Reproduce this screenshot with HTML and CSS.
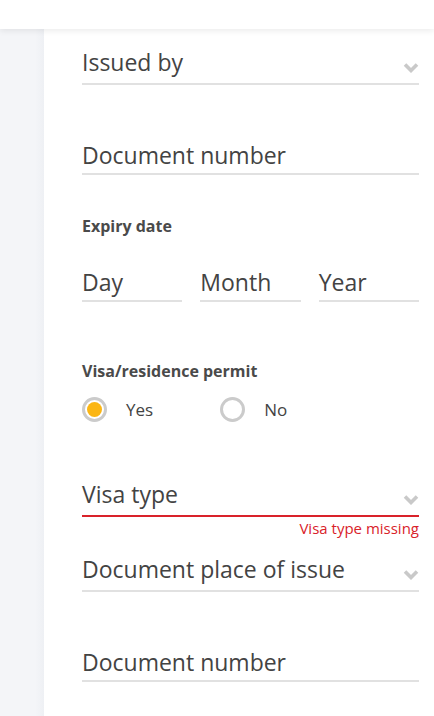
FILE: index.html
```html
<!DOCTYPE html>
<html lang="en">
<head>
    <meta charset="UTF-8">
    <meta name="viewport" content="width=device-width, initial-scale=1.0">
    <title>Travel document</title>
    <link rel="stylesheet" href="styles.css">
</head>
<body>
    <header class="topbar"></header>
    <div class="page">
        <aside class="sidebar"></aside>
        <main class="form">
            <div class="field select">
                <span class="placeholder">Issued by</span>
                <svg class="chevron" viewBox="0 0 16 11"><path d="M2 2.5l6 6 6-6"/></svg>
            </div>
            <div class="field">
                <span class="placeholder">Document number</span>
            </div>

            <p class="label label-expiry">Expiry date</p>
            <div class="date-row">
                <div class="field date"><span class="placeholder">Day</span></div>
                <div class="field date"><span class="placeholder">Month</span></div>
                <div class="field date"><span class="placeholder">Year</span></div>
            </div>

            <p class="label label-visa">Visa/residence permit</p>
            <div class="radios">
                <label class="radio checked"><span class="dot"></span>Yes</label>
                <label class="radio"><span class="dot"></span>No</label>
            </div>

            <div class="field select invalid">
                <span class="placeholder">Visa type</span>
                <svg class="chevron" viewBox="0 0 16 11"><path d="M2 2.5l6 6 6-6"/></svg>
            </div>
            <p class="error">Visa type missing</p>
            <div class="field select">
                <span class="placeholder">Document place of issue</span>
                <svg class="chevron" viewBox="0 0 16 11"><path d="M2 2.5l6 6 6-6"/></svg>
            </div>
            <div class="field">
                <span class="placeholder">Document number</span>
            </div>
        </main>
    </div>
</body>
</html>
```

FILE: styles.css
```css
body {
    margin: 0;
    font-family: 'Open Sans', 'Noto Sans', sans-serif;
    color: #434343;
    background: #fff;
}
.topbar {
    position: relative;
    z-index: 2;
    height: 29px;
    background: #fff;
    box-shadow: 0 2px 6px rgba(0, 0, 0, 0.08);
}
.page {
    display: flex;
    min-height: 687px;
}
.sidebar {
    width: 44px;
    flex-shrink: 0;
    background: linear-gradient(to right, #f4f5f8 80%, #eef0f4);
}
.form {
    flex: 1;
    padding: 17px 15px 0 38px;
}
.field {
    display: flex;
    align-items: center;
    justify-content: space-between;
    height: 37px;
    border-bottom: 2px solid #e1e1e1;
    font-size: 23px;
}
.field + .field {
    margin-top: 51px;
}
.field.invalid {
    border-bottom-color: #d9222a;
}
/* dropdowns keep their text a little higher than plain inputs */
.select .placeholder {
    margin-bottom: 6px;
}
.chevron {
    width: 16px;
    height: 11px;
    margin-top: 5px;
    fill: none;
    stroke: #c9c9c9;
    stroke-width: 3.6;
}
.label {
    margin: 0;
    font-size: 16px;
    font-weight: 700;
    color: #4a4a4a;
}
.label-expiry {
    margin-top: 40px;
}
.date-row {
    display: flex;
    gap: 18px;
    margin-top: 26px;
}
.field.date {
    flex: 1;
    margin-top: 0;
}
.label-visa {
    margin-top: 58px;
}
.radios {
    display: flex;
    gap: 67px;
    margin-top: 15px;
    font-size: 17px;
}
.radio {
    display: flex;
    align-items: center;
    gap: 19px;
}
.dot {
    width: 25px;
    height: 25px;
    border: 3px solid #cbcbcb;
    border-radius: 50%;
    box-sizing: border-box;
    display: flex;
    align-items: center;
    justify-content: center;
}
.radio.checked .dot::after {
    content: "";
    width: 15px;
    height: 15px;
    border-radius: 50%;
    background: #fbb614;
}
.radios + .field {
    margin-top: 56px;
}
.error {
    margin: 1px 0 0;
    text-align: right;
    font-size: 15px;
    color: #d9222a;
    line-height: 20px;
}
.error + .field {
    margin-top: 15px;
}
```
